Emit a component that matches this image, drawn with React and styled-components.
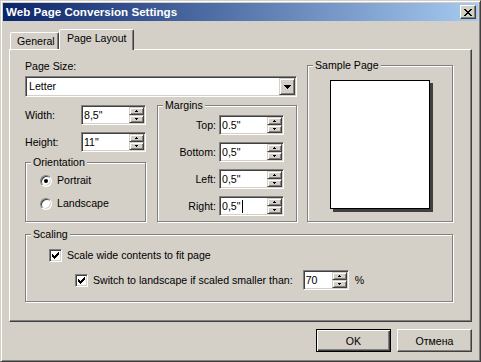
import React from "react";
import styled, { createGlobalStyle, css } from "styled-components";

const FACE = "#D4D0C8";

const GlobalStyle = createGlobalStyle`
  html, body { margin: 0; padding: 0; background: ${FACE}; }
  * { box-sizing: border-box; }
`;

const Window = styled.div`
  width: 481px;
  height: 362px;
  background: ${FACE};
  border: 1px solid;
  border-color: ${FACE} #404040 #404040 ${FACE};
  box-shadow: inset 1px 1px #fff, inset -1px -1px #808080;
  padding: 2px;
  display: flex;
  flex-direction: column;
  font: 10.6px "Liberation Sans", Arial, sans-serif;
  color: #000;
`;

const TitleBar = styled.div`
  height: 18px;
  flex: none;
  display: flex;
  align-items: center;
  justify-content: space-between;
  padding: 0 2px 0 3px;
  background: linear-gradient(to right, #0a246a, #a6caf0);
`;

const TitleText = styled.span`
  color: #fff;
  font-weight: bold;
  font-size: 11.6px;
  line-height: 14px;
`;

const CloseBtn = styled.div`
  width: 16px;
  height: 14px;
  background: ${FACE};
  border: 1px solid;
  border-color: #fff #404040 #404040 #fff;
  box-shadow: inset -1px -1px #808080;
  display: flex;
  align-items: center;
  justify-content: center;
  padding-right: 1px;
`;

const Body = styled.div`
  flex: 1;
  display: flex;
  flex-direction: column;
  padding: 8px 6px 0 6px;
`;

const TabStrip = styled.div`
  height: 20px;
  display: flex;
  align-items: flex-end;
  padding-left: 1px;
`;

const Tab = styled.div`
  width: ${(p) => p.$w}px;
  height: ${(p) => (p.$active ? 21 : 17)}px;
  margin-bottom: ${(p) => (p.$active ? -1 : 0)}px;
  position: relative;
  z-index: ${(p) => (p.$active ? 2 : 1)};
  background: ${FACE};
  border: 1px solid;
  border-bottom: none;
  border-color: #fff #404040 transparent #fff;
  border-radius: 2px 2px 0 0;
  box-shadow: inset -1px 0 #808080;
  padding: 2px 0 0 ${(p) => p.$pl}px;
  line-height: 13px;
  white-space: nowrap;
`;

const Panel = styled.div`
  height: 273px;
  flex: none;
  border: 1px solid;
  border-color: #fff #404040 #404040 #fff;
  box-shadow: inset -1px -1px #808080;
  padding: 10px 18px 0 15px;
`;

const PanelGrid = styled.div`
  display: grid;
  grid-template-columns: 272px 146px;
  column-gap: 10px;
  row-gap: 12px;
`;

const LeftCol = styled.div`
  display: flex;
  flex-direction: column;
`;

const FieldLabel = styled.div`
  line-height: 13px;
  height: 13px;
`;

const Sunken = css`
  background: #fff;
  border: 1px solid;
  border-color: #808080 #fff #fff #808080;
  box-shadow: inset 1px 1px #404040, inset -1px -1px ${FACE};
  padding: 1px;
`;

const Raised = css`
  background: ${FACE};
  border: 1px solid;
  border-color: ${FACE} #404040 #404040 ${FACE};
  box-shadow: inset 1px 1px #fff, inset -1px -1px #808080;
`;

const Select = styled.div`
  ${Sunken};
  margin-top: 3px;
  height: 21px;
  display: flex;
`;

const SelectValue = styled.div`
  flex: 1;
  padding-left: 2px;
  line-height: 17px;
`;

const DropBtn = styled.div`
  ${Raised};
  width: 16px;
  height: 17px;
  display: flex;
  align-items: center;
  justify-content: center;
`;

const SubGrid = styled.div`
  margin-top: 8px;
  display: grid;
  grid-template-columns: 121px 140px;
  column-gap: 11px;
`;

const SizeCol = styled.div`
  display: flex;
  flex-direction: column;
  gap: 7px;
`;

const SizeRow = styled.div`
  display: flex;
  align-items: center;
  justify-content: space-between;
`;

const SpinBox = styled.div`
  ${Sunken};
  width: ${(p) => p.$w}px;
  height: 20px;
  margin-left: ${(p) => p.$ml || 0}px;
  display: flex;
  flex: none;
`;

const SpinText = styled.div`
  flex: 1;
  padding-left: 1px;
  line-height: 16px;
  display: flex;
  align-items: center;
`;

const Caret = styled.span`
  display: inline-block;
  width: 1px;
  height: 13px;
  background: #000;
  margin-left: 1px;
`;

const SpinButtons = styled.div`
  width: 15px;
  display: flex;
  flex-direction: column;
`;

const SpinBtn = styled.div`
  ${Raised};
  flex: 1;
  display: flex;
  align-items: center;
  justify-content: center;
`;

const GroupBox = styled.div`
  position: relative;
  height: ${(p) => p.$h}px;
  margin-top: ${(p) => p.$mt || 0}px;
  grid-column: ${(p) => (p.$wide ? "1 / span 2" : "auto")};
  border: 1px solid #808080;
  box-shadow: inset 1px 1px #fff, 1px 1px #fff;
`;

const GroupLabel = styled.span`
  position: absolute;
  top: -7px;
  left: 5px;
  padding: 0 2px;
  background: ${FACE};
  line-height: 13px;
  white-space: nowrap;
`;

const MarginGrid = styled.div`
  display: grid;
  grid-template-columns: 58px 65px;
  column-gap: 3px;
  row-gap: 7px;
  padding-top: 9px;
  align-items: center;
`;

const MarginLabel = styled.div`
  text-align: right;
`;

const RadioList = styled.div`
  display: flex;
  flex-direction: column;
  gap: 10px;
  padding: 11px 0 0 14px;
`;

const OptionRow = styled.div`
  display: flex;
  align-items: center;
  gap: 5px;
  height: ${(p) => p.$h || 13}px;
  margin-left: ${(p) => p.$indent || 0}px;
  line-height: 13px;
`;

const Radio = styled.div`
  width: 12px;
  height: 12px;
  flex: none;
  border-radius: 50%;
  background: #fff;
  border: 1px solid;
  border-color: #808080 #fff #fff #808080;
  box-shadow: inset 1px 1px #404040, inset -1px -1px ${FACE};
  display: flex;
  align-items: center;
  justify-content: center;
`;

const RadioDot = styled.div`
  width: 4px;
  height: 4px;
  border-radius: 50%;
  background: #000;
`;

const Check = styled.div`
  width: 13px;
  height: 13px;
  flex: none;
  ${Sunken};
  padding: 2px;
  display: flex;
  align-items: center;
  justify-content: center;
`;

const Preview = styled.div`
  width: 100px;
  height: 129px;
  margin: 14px auto 0;
  background: #fff;
  border: 1px solid #000;
  box-shadow: 3px 3px 0 #404040;
`;

const ScalingList = styled.div`
  display: flex;
  flex-direction: column;
  gap: 8px;
  padding: 14px 0 0 23px;
`;

const Percent = styled.span`
  margin-left: 1px;
`;

const Footer = styled.div`
  display: flex;
  justify-content: flex-end;
  gap: 6px;
  padding-top: 7px;
`;

const Button = styled.div`
  width: 75px;
  height: 23px;
  display: flex;
  align-items: center;
  justify-content: center;
  background: ${FACE};
  border: 1px solid;
  border-color: #fff #404040 #404040 #fff;
  box-shadow: inset -1px -1px #808080;
  ${(p) =>
    p.$default &&
    css`
      border-color: #000;
      box-shadow: inset 1px 1px #fff, inset -1px -1px #404040,
        inset -2px -2px #808080;
    `}
`;

function Pix({ w, h, rects }) {
  return (
    <svg width={w} height={h} viewBox={`0 0 ${w} ${h}`} shapeRendering="crispEdges">
      {rects.map(([x, y, rw, rh], i) => (
        <rect key={i} x={x} y={y} width={rw} height={rh || 1} fill="#000" />
      ))}
    </svg>
  );
}

const closeGlyph = [
  [0, 0, 2], [6, 0, 2],
  [1, 1, 2], [5, 1, 2],
  [2, 2, 4],
  [3, 3, 2],
  [2, 4, 4],
  [1, 5, 2], [5, 5, 2],
  [0, 6, 2], [6, 6, 2],
];
const downArrow = [[0, 0, 7], [1, 1, 5], [2, 2, 3], [3, 3, 1]];
const spinUp = [[1, 0, 1], [0, 1, 3]];
const spinDown = [[0, 0, 3], [1, 1, 1]];
const checkGlyph = [
  [0, 2, 1, 3], [1, 3, 1, 3], [2, 4, 1, 3], [3, 3, 1, 3],
  [4, 2, 1, 3], [5, 1, 1, 3], [6, 0, 1, 3],
];

function Spin({ value, w = 65, caret, ml }) {
  return (
    <SpinBox $w={w} $ml={ml}>
      <SpinText>
        {value}
        {caret && <Caret />}
      </SpinText>
      <SpinButtons>
        <SpinBtn><Pix w={3} h={2} rects={spinUp} /></SpinBtn>
        <SpinBtn><Pix w={3} h={2} rects={spinDown} /></SpinBtn>
      </SpinButtons>
    </SpinBox>
  );
}

function CheckBox() {
  return (
    <Check>
      <Pix w={7} h={7} rects={checkGlyph} />
    </Check>
  );
}

export default function App() {
  const margins = [
    ["Top:", '0.5"'],
    ["Bottom:", '0,5"'],
    ["Left:", '0,5"'],
    ["Right:", '0,5"', true],
  ];
  return (
    <>
      <GlobalStyle />
      <Window>
        <TitleBar>
          <TitleText>Web Page Conversion Settings</TitleText>
          <CloseBtn>
            <Pix w={8} h={7} rects={closeGlyph} />
          </CloseBtn>
        </TitleBar>
        <Body>
          <TabStrip>
            <Tab $w={49} $pl={6}>General</Tab>
            <Tab $w={75} $pl={7} $active>Page Layout</Tab>
          </TabStrip>
          <Panel>
            <PanelGrid>
              <LeftCol>
                <FieldLabel>Page Size:</FieldLabel>
                <Select>
                  <SelectValue>Letter</SelectValue>
                  <DropBtn>
                    <Pix w={7} h={4} rects={downArrow} />
                  </DropBtn>
                </Select>
                <SubGrid>
                  <SizeCol>
                    <SizeRow>
                      <span>Width:</span>
                      <Spin value='8,5"' />
                    </SizeRow>
                    <SizeRow>
                      <span>Height:</span>
                      <Spin value='11"' />
                    </SizeRow>
                    <GroupBox $h={60} $mt={3}>
                      <GroupLabel>Orientation</GroupLabel>
                      <RadioList>
                        <OptionRow>
                          <Radio><RadioDot /></Radio>
                          <span>Portrait</span>
                        </OptionRow>
                        <OptionRow>
                          <Radio />
                          <span>Landscape</span>
                        </OptionRow>
                      </RadioList>
                    </GroupBox>
                  </SizeCol>
                  <GroupBox $h={117}>
                    <GroupLabel>Margins</GroupLabel>
                    <MarginGrid>
                      {margins.map(([l, v, c]) => (
                        <React.Fragment key={l}>
                          <MarginLabel>{l}</MarginLabel>
                          <Spin value={v} caret={c} />
                        </React.Fragment>
                      ))}
                    </MarginGrid>
                  </GroupBox>
                </SubGrid>
              </LeftCol>
              <GroupBox $h={157} $mt={5}>
                <GroupLabel>Sample Page</GroupLabel>
                <Preview />
              </GroupBox>
              <GroupBox $h={68} $wide>
                <GroupLabel>Scaling</GroupLabel>
                <ScalingList>
                  <OptionRow>
                    <CheckBox />
                    <span>Scale wide contents to fit page</span>
                  </OptionRow>
                  <OptionRow $indent={26} $h={20}>
                    <CheckBox />
                    <span>Switch to landscape if scaled smaller than:</span>
                    <Spin value="70" w={46} ml={5} />
                    <Percent>%</Percent>
                  </OptionRow>
                </ScalingList>
              </GroupBox>
            </PanelGrid>
          </Panel>
          <Footer>
            <Button $default>OK</Button>
            <Button>Отмена</Button>
          </Footer>
        </Body>
      </Window>
    </>
  );
}
